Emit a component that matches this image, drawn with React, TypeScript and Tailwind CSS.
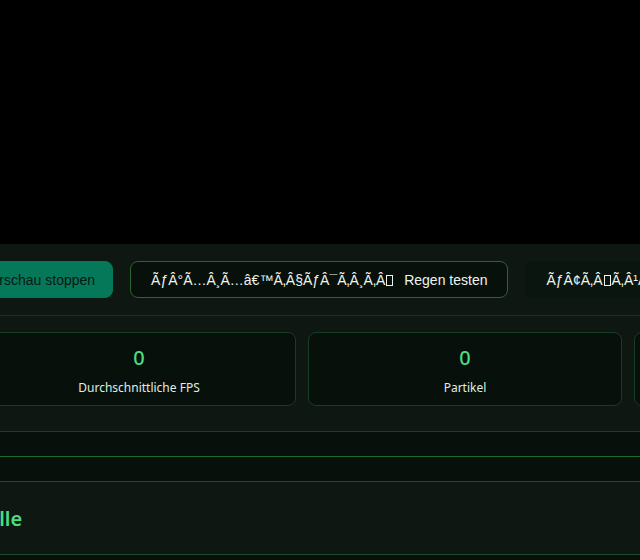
const Tofu = ({ wide = false }: { wide?: boolean }) => (
  <span
    className={`ml-[1px] inline-block h-[11px] w-[7px] border border-current align-[-1px] ${wide ? 'mr-[3px]' : 'mr-[1px]'}`}
  />
)

const stats = [
  { value: '0', label: 'Aktuelle FPS' },
  { value: '0', label: 'Durchschnittliche FPS' },
  { value: '0', label: 'Partikel' },
  { value: '0', label: 'Tropfen' },
]

export default function App() {
  return (
    <div className="h-[560px] w-[640px] overflow-hidden bg-[#07100a] font-['Noto_Sans',sans-serif]">
      {/* canvas preview */}
      <div className="h-[244px] bg-black" />

      <div className="bg-[#0e1712]">
        <div className="border-b border-[#1a3322] pb-[17px] pt-[17px]">
          <div className="-ml-[35px] flex gap-[17px] whitespace-nowrap font-['Liberation_Sans',Arial,sans-serif] text-[14px] leading-4">
            <button
              type="button"
              className="shrink-0 rounded-lg border border-[#06785a] bg-[#06785a] px-[17px] py-[9.5px] text-[#0a1712]"
            >
              Vorschau stoppen
            </button>
            <button
              type="button"
              className="shrink-0 rounded-lg border border-[#2a6630] bg-[#08100b] px-5 py-[9.5px] text-[#eef5ee]"
            >
              ÃƒÂ°Ã…Â¸Ã…â€™Ã‚Â§ÃƒÂ¯Ã‚Â¸Ã‚Â<Tofu wide />&nbsp; Regen testen
            </button>
            <button
              type="button"
              className="shrink-0 rounded-lg border border-[#0b150f] bg-[#0b150f] px-5 py-[9.5px] text-[#eef5ee]"
            >
              ÃƒÂ¢Ã‚Â<Tofu />Ã‚Â¹ÃƒÂ¯Ã‚Â¸Ã‚Â<Tofu wide />&nbsp; Alle stoppen
            </button>
          </div>
        </div>

        <div className="pb-[25px] pt-[16px]">
          <div className="-ml-[344px] flex gap-[12px]">
            {stats.map((s) => (
              <div
                key={s.label}
                className="flex h-[74px] w-[314px] shrink-0 flex-col items-center rounded-lg border border-[#173d24] bg-[#08100b] pt-[11px]"
              >
                <span className="text-[20px] font-medium leading-7 text-[#4ade80]">{s.value}</span>
                <span className="mt-[8px] text-[12px] leading-4 text-[#dfeee3]">{s.label}</span>
              </div>
            ))}
          </div>
        </div>
      </div>

      <div className="border-t border-[#25382b] bg-[#07100a]">
        <div className="h-[25px] border-b border-[#1e6a2d]" />
        <div className="h-[25px] border-b border-[#1d4a29]" />
      </div>

      <div className="border-b border-[#1d4a29] bg-[#0e1712] pb-[21px] pt-[23px]">
        <h2 className="-ml-[141px] text-[20px] font-semibold leading-[28px] text-[#4ade80]">
          Wetter-Kontrolle
        </h2>
      </div>
    </div>
  )
}
